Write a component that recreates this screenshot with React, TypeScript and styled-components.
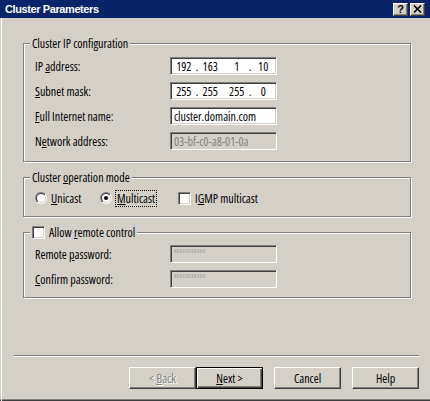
import styled, { createGlobalStyle, css } from "styled-components";

const FONT = `"Open Sans", "Liberation Sans", Arial, sans-serif`;

const GlobalStyle = createGlobalStyle`
  html, body {
    margin: 0;
    padding: 0;
    background: #d4d0c8;
  }
  body {
    font-family: ${FONT};
    font-stretch: 75%;
    font-size: 12px;
    color: #000;
  }
`;

const sunken = css`
  border: 1px solid;
  border-color: #808080 #fff #fff #808080;
  box-shadow: inset 1px 1px 0 #404040, inset -1px -1px 0 #d4d0c8;
`;

export default function App() {
  return (
    <>
      <GlobalStyle />
      <Window>
        <TitleBar>
          <Title>Cluster Parameters</Title>
          <CaptionButtons>
            <CaptionButton>?</CaptionButton>
            <CaptionButton>
              <svg width="9" height="8" viewBox="0 0 9 8">
                <path d="M1 0.5 L8 7.5 M8 0.5 L1 7.5" stroke="#000" strokeWidth="1.6" />
              </svg>
            </CaptionButton>
          </CaptionButtons>
        </TitleBar>

        <Body>
          <Form>
            <Group>
              <Legend>
                <span>Cluster IP configuration</span>
              </Legend>
              <Rows>
                <Row>
                  <Label>
                    IP <u>a</u>ddress:
                  </Label>
                  <Field>
                    <IpValue parts={["192", "163", "1", "10"]} />
                  </Field>
                </Row>
                <Row>
                  <Label>
                    <u>S</u>ubnet mask:
                  </Label>
                  <Field>
                    <IpValue parts={["255", "255", "255", "0"]} />
                  </Field>
                </Row>
                <Row>
                  <Label>
                    <u>F</u>ull Internet name:
                  </Label>
                  <Field>cluster.domain.com</Field>
                </Row>
                <Row>
                  <Label>
                    N<u>e</u>twork address:
                  </Label>
                  <Field $disabled>03-bf-c0-a8-01-0a</Field>
                </Row>
              </Rows>
            </Group>

            <Group>
              <Legend>
                <span>
                  Cluster <u>o</u>peration mode
                </span>
              </Legend>
              <ModeRow>
                <Option $width={65}>
                  <Radio />
                  <span>
                    <u>U</u>nicast
                  </span>
                </Option>
                <Option $width={78}>
                  <Radio checked />
                  <Focus>
                    <u>M</u>ulticast
                  </Focus>
                </Option>
                <Option>
                  <CheckBox />
                  <span>
                    I<u>G</u>MP multicast
                  </span>
                </Option>
              </ModeRow>
            </Group>

            <Group>
              <Legend>
                <CheckBox />
                <span>
                  Allow <u>r</u>emote control
                </span>
              </Legend>
              <Rows $top={12} $bottom={9}>
                <Row>
                  <Label>
                    Remote <u>p</u>assword:
                  </Label>
                  <Field $disabled>
                    <Masked>xxxxxxxxxxx</Masked>
                  </Field>
                </Row>
                <Row>
                  <Label>
                    <u>C</u>onfirm password:
                  </Label>
                  <Field $disabled>
                    <Masked>xxxxxxxxxxx</Masked>
                  </Field>
                </Row>
              </Rows>
            </Group>
          </Form>

          <Footer>
            <Separator />
            <ButtonRow>
              <WizardPair>
                <Button disabled>
                  &lt; <u>B</u>ack
                </Button>
                <Button $default>
                  <u>N</u>ext &gt;
                </Button>
              </WizardPair>
              <Button>Cancel</Button>
              <Button>Help</Button>
            </ButtonRow>
          </Footer>
        </Body>
      </Window>
    </>
  );
}

function IpValue({ parts }: { parts: string[] }) {
  return (
    <IpRow>
      <Octet>{parts[0]}</Octet>
      <Dot>.</Dot>
      <Octet>{parts[1]}</Octet>
      <Dot />
      <Octet>{parts[2]}</Octet>
      <Dot>.</Dot>
      <Octet>{parts[3]}</Octet>
    </IpRow>
  );
}

function Radio({ checked }: { checked?: boolean }) {
  return (
    <svg width="12" height="12" viewBox="0 0 12 12">
      <defs>
        <linearGradient id="rOuter" x1="0" y1="0" x2="1" y2="1">
          <stop offset="0.5" stopColor="#808080" />
          <stop offset="0.5" stopColor="#ffffff" />
        </linearGradient>
        <linearGradient id="rInner" x1="0" y1="0" x2="1" y2="1">
          <stop offset="0.5" stopColor="#404040" />
          <stop offset="0.5" stopColor="#d4d0c8" />
        </linearGradient>
      </defs>
      <circle cx="6" cy="6" r="6" fill="url(#rOuter)" />
      <circle cx="6" cy="6" r="5" fill="url(#rInner)" />
      <circle cx="6" cy="6" r="4" fill="#fff" />
      {checked && <circle cx="6" cy="6" r="2" fill="#000" />}
    </svg>
  );
}

const Window = styled("div")`
  width: 430px;
  height: 401px;
  box-sizing: border-box;
  background: #d4d0c8;
  display: flex;
  flex-direction: column;
  box-shadow: inset 0 -1px 0 #404040, inset 0 -2px 0 #808080;
  overflow: hidden;
`;

const TitleBar = styled("div")`
  height: 18px;
  flex-shrink: 0;
  background: #0a246a;
  display: flex;
  align-items: center;
  justify-content: space-between;
  padding: 0 5px 0 5px;
`;

const Title = styled("span")`
  color: #fff;
  font: bold 11px "Liberation Sans", Arial, sans-serif;
  letter-spacing: -0.4px;
`;

const CaptionButtons = styled("div")`
  display: flex;
  gap: 2px;
`;

const CaptionButton = styled("div")`
  width: 15px;
  height: 13px;
  box-sizing: border-box;
  background: #d4d0c8;
  border: 1px solid;
  border-color: #fff #404040 #404040 #fff;
  box-shadow: inset -1px -1px 0 #808080;
  display: flex;
  align-items: center;
  justify-content: center;
  font: bold 11px "Liberation Sans", Arial, sans-serif;
  line-height: 1;
`;

const Body = styled("div")`
  flex: 1;
  display: flex;
  flex-direction: column;
  margin-left: 1px;
  border-left: 1px solid #fff;
`;

const Form = styled("div")`
  display: flex;
  flex-direction: column;
  gap: 15px;
  padding: 25px 19px 0 21px;
`;

const Group = styled("div")`
  position: relative;
  border: 1px solid #808080;
  box-shadow: inset 1px 1px 0 #fff, 1px 1px 0 #fff;
`;

const Legend = styled("div")`
  position: absolute;
  top: -7px;
  left: 6px;
  height: 13px;
  padding: 0 2px;
  background: #d4d0c8;
  display: flex;
  align-items: center;
  gap: 4px;
  white-space: nowrap;
`;

type RowsProps = { $top?: number; $bottom?: number };
const Rows = styled("div")<RowsProps>`
  display: flex;
  flex-direction: column;
  gap: 7px;
  padding: ${({ $top = 13 }) => $top}px 0 ${({ $bottom = 11 }) => $bottom}px 11px;
`;

const Row = styled("div")`
  display: flex;
  align-items: center;
  height: 18px;
`;

const Label = styled("span")`
  width: 135px;
  white-space: nowrap;
`;

type FieldProps = { $disabled?: boolean };
const Field = styled("div")<FieldProps>`
  ${sunken};
  width: 107px;
  height: 18px;
  box-sizing: border-box;
  padding: 0 3px;
  display: flex;
  align-items: center;
  white-space: nowrap;
  overflow: hidden;
  background: ${({ $disabled }) => ($disabled ? "#d4d0c8" : "#fff")};
  color: ${({ $disabled }) => ($disabled ? "#808080" : "#000")};
`;

const IpRow = styled("div")`
  display: flex;
  width: 100%;
`;

const Octet = styled("span")`
  width: 20px;
  text-align: center;
`;

const Dot = styled("span")`
  width: 7px;
  text-align: center;
`;

const Masked = styled("span")`
  align-self: flex-start;
  margin-top: 1px;
  font-size: 7px;
  line-height: 8px;
  letter-spacing: 0.3px;
  color: #a0a0a0;
`;

const ModeRow = styled("div")`
  display: flex;
  align-items: center;
  height: 14px;
  padding: 13px 0 11px 11px;
`;

type OptionProps = { $width?: number };
const Option = styled("label")<OptionProps>`
  display: flex;
  align-items: center;
  gap: 4px;
  white-space: nowrap;
  width: ${({ $width }) => ($width ? `${$width}px` : "auto")};
`;

const Focus = styled("span")`
  outline: 1px dotted #000;
  padding: 1px 1px;
  line-height: 13px;
`;

const CheckBox = styled("span")`
  ${sunken};
  display: inline-block;
  width: 13px;
  height: 13px;
  box-sizing: border-box;
  background: #fff;
  flex-shrink: 0;
`;

const Footer = styled("div")`
  margin-top: auto;
  padding: 0 11px 12px 12px;
`;

const Separator = styled("div")`
  height: 1px;
  background: #808080;
  border-bottom: 1px solid #fff;
`;

const ButtonRow = styled("div")`
  display: flex;
  justify-content: flex-end;
  gap: 11px;
  margin-top: 10px;
`;

const WizardPair = styled("div")`
  display: flex;
`;

type ButtonProps = { $default?: boolean };
const Button = styled("button")<ButtonProps>`
  width: 67px;
  height: 22px;
  box-sizing: border-box;
  margin: 0;
  padding: 0;
  font-family: ${FONT};
  font-stretch: 75%;
  font-size: 12px;
  color: #000;
  background: #d4d0c8;
  border: 1px solid;
  border-color: #fff #404040 #404040 #fff;
  box-shadow: inset -1px -1px 0 #808080;

  ${({ $default }) =>
    $default &&
    css`
      border: 1px solid #000;
      box-shadow: inset 1px 1px 0 #fff, inset -1px -1px 0 #404040, inset -2px -2px 0 #808080;
    `}

  &:disabled {
    color: #808080;
    text-shadow: 1px 1px 0 #fff;
  }
`;
